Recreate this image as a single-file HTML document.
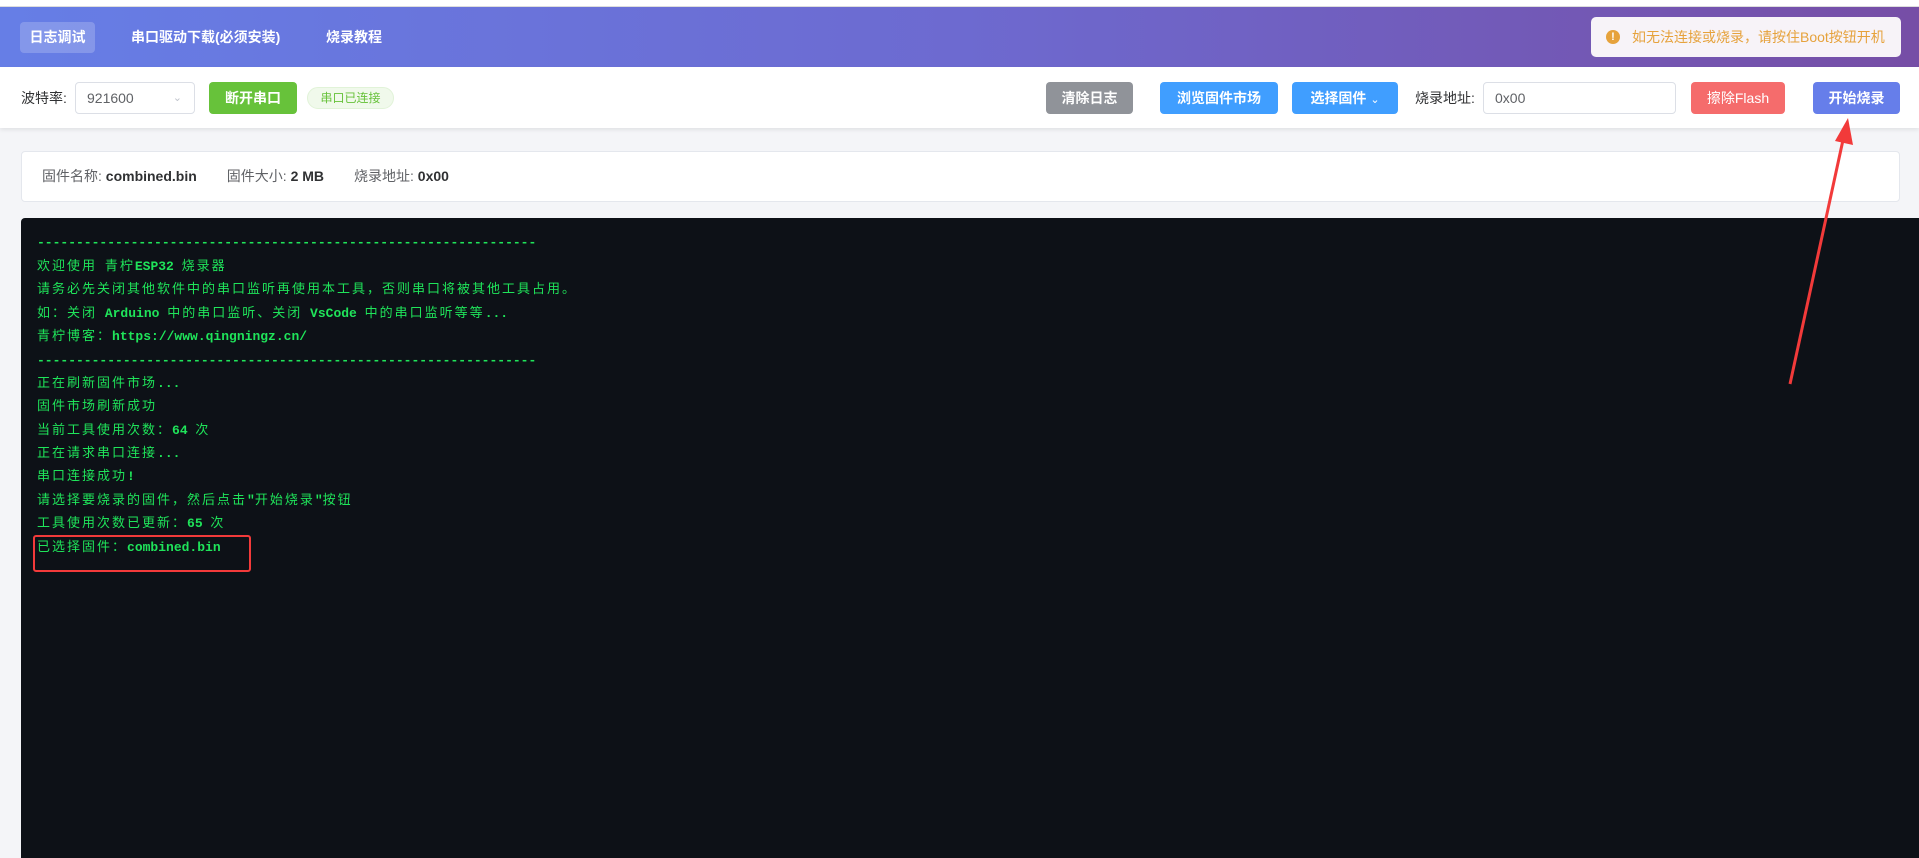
<!DOCTYPE html>
<html><head><meta charset="utf-8"><style>
*{margin:0;padding:0;box-sizing:border-box}
body{width:1919px;height:844px;overflow:hidden;background:#f4f5f8;font-family:"Liberation Sans","Noto Sans CJK SC",sans-serif;position:relative}
.abs{position:absolute}
#top{left:0;top:0;width:1919px;height:7px;background:#fff;border-bottom:1px solid #ddd}
#hdr{left:0;top:7px;width:1919px;height:60px;background:linear-gradient(90deg,#667ee6 0%,#6d6ad0 50%,#764ea6 100%)}
.tab{position:absolute;top:15px;height:31px;line-height:31px;color:#fff;font-size:14px;font-weight:bold}
#alert{left:1591px;top:17px;width:310px;height:40px;background:#f7f3f8;border-radius:5px;color:#e6a23c;font-size:14px;line-height:40px;padding-left:41px}
#alert i{position:absolute;left:15px;top:13px;width:14px;height:14px;border-radius:50%;background:#e6a23c;color:#fff;font-style:normal;font-size:11px;line-height:14px;text-align:center;font-weight:bold}
#bar{left:0;top:67px;width:1919px;height:61px;background:#fff;box-shadow:0 2px 4px rgba(0,0,0,.08)}
.btn{position:absolute;top:15px;height:32px;border-radius:4px;color:#fff;font-size:14px;font-weight:bold;line-height:32px;text-align:center}
.lbl{position:absolute;top:15px;line-height:32px;font-size:14px;color:#303133}
.inp{position:absolute;top:15px;height:32px;border:1px solid #dcdfe6;border-radius:4px;font-size:14px;color:#606266;line-height:30px;padding-left:11px}
#card{left:21px;top:151px;width:1879px;height:51px;background:#fff;border:1px solid #e4e7ed;border-radius:4px;font-size:14px;line-height:49px;color:#606266}
#card b{color:#303133;font-weight:bold}
#term{left:21px;top:218px;width:1898px;height:640px;background:#0d1117;border-radius:4px 0 0 0;font-family:"Liberation Mono","Noto Sans CJK SC",monospace;font-size:13px;color:#1fe45a}
.ln{position:absolute;left:16px;white-space:pre;line-height:16px;font-weight:bold}
.c{font-size:13px;letter-spacing:2px;font-weight:normal}
</style></head><body>
<div id="top" class="abs"></div>
<div id="hdr" class="abs">
 <div class="tab" style="left:20px;width:75px;background:rgba(255,255,255,.2);border-radius:4px;text-align:center">日志调试</div>
 <div class="tab" style="left:131px">串口驱动下载(必须安装)</div>
 <div class="tab" style="left:326px">烧录教程</div>
</div>
<div id="alert" class="abs"><i>!</i>如无法连接或烧录，请按住Boot按钮开机</div>
<div id="bar" class="abs">
 <div class="lbl" style="left:21px">波特率:</div>
 <div class="inp" style="left:75px;width:120px">921600<span style="position:absolute;right:12px;top:0;color:#c0c4cc;font-size:11px">&#8964;</span></div>
 <div class="btn" style="left:209px;width:88px;background:#67c23a">断开串口</div>
 <div style="position:absolute;left:307px;top:20px;width:87px;height:22px;background:#f0f9eb;border:1px solid #e1f3d8;border-radius:11px;color:#67c23a;font-size:12px;line-height:20px;text-align:center">串口已连接</div>
 <div class="btn" style="left:1046px;width:87px;background:#909399">清除日志</div>
 <div class="btn" style="left:1160px;width:118px;background:#409eff">浏览固件市场</div>
 <div class="btn" style="left:1292px;width:106px;background:#409eff">选择固件 <span style="font-weight:normal;font-size:11px">&#8964;</span></div>
 <div class="lbl" style="left:1415px">烧录地址:</div>
 <div class="inp" style="left:1483px;width:193px">0x00</div>
 <div class="btn" style="left:1691px;width:94px;background:#f56c6c;font-weight:normal">擦除Flash</div>
 <div class="btn" style="left:1813px;width:87px;background:#667eea">开始烧录</div>
</div>
<div id="card" class="abs"><span style="margin-left:20px">固件名称: </span><b>combined.bin</b><span style="margin-left:30px">固件大小: </span><b>2 MB</b><span style="margin-left:30px">烧录地址: </span><b>0x00</b></div>
<div id="term" class="abs">
 <div class="ln" style="top:17px">----------------------------------------------------------------</div>
 <div class="ln" style="top:41px"><span class="c">欢迎使用</span> <span class="c">青柠</span>ESP32 <span class="c">烧录器</span></div>
 <div class="ln" style="top:64px"><span class="c">请务必先关闭其他软件中的串口监听再使用本工具，否则串口将被其他工具占用。</span></div>
 <div class="ln" style="top:88px"><span class="c">如：关闭</span> Arduino <span class="c">中的串口监听、关闭</span> VsCode <span class="c">中的串口监听等等</span>...</div>
 <div class="ln" style="top:111px"><span class="c">青柠博客：</span>https://www.qingningz.cn/</div>
 <div class="ln" style="top:135px">----------------------------------------------------------------</div>
 <div class="ln" style="top:158px"><span class="c">正在刷新固件市场</span>...</div>
 <div class="ln" style="top:181px"><span class="c">固件市场刷新成功</span></div>
 <div class="ln" style="top:205px"><span class="c">当前工具使用次数：</span>64 <span class="c">次</span></div>
 <div class="ln" style="top:228px"><span class="c">正在请求串口连接</span>...</div>
 <div class="ln" style="top:251px"><span class="c">串口连接成功</span>!</div>
 <div class="ln" style="top:275px"><span class="c">请选择要烧录的固件，然后点击</span>"<span class="c">开始烧录</span>"<span class="c">按钮</span></div>
 <div class="ln" style="top:298px"><span class="c">工具使用次数已更新：</span>65 <span class="c">次</span></div>
 <div class="ln" style="top:322px"><span class="c">已选择固件：</span>combined.bin</div>
</div>
<div class="abs" style="left:33px;top:535px;width:218px;height:37px;border:2px solid #f23a3a;border-radius:3px"></div>
<svg class="abs" style="left:0;top:0" width="1919" height="844">
 <line x1="1790" y1="384" x2="1843" y2="140" stroke="#f23a3a" stroke-width="3"/>
 <polygon points="1848,118 1853,145 1835,141" fill="#f23a3a"/>
</svg>
</body></html>
